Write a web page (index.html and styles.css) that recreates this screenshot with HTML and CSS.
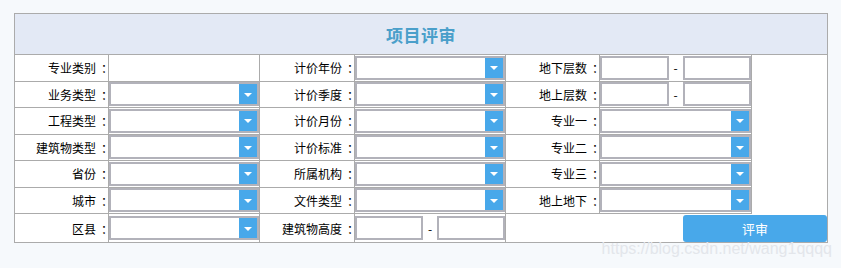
FILE: index.html
```html
<!DOCTYPE html>
<html lang="zh-CN">

<head>
    <meta charset="UTF-8">
    <meta name="viewport" content="width=device-width, initial-scale=1.0">
    <title>项目评审</title>
    <link rel="stylesheet" href="styles.css">
</head>

<body>
    <form class="review">
        <table class="review-table">
            <colgroup>
                <col class="c-lbl1">
                <col class="c-fld1">
                <col class="c-lbl2">
                <col class="c-fld2">
                <col class="c-lbl3">
                <col class="c-fld3">
                <col class="c-side">
            </colgroup>
            <tr class="row-title">
                <th colspan="7">项目评审</th>
            </tr>
            <tr>
                <td class="lbl">专业类别<span class="colon">：</span></td>
                <td></td>
                <td class="lbl">计价年份<span class="colon">：</span></td>
                <td><div class="combo"><span class="combo-text"></span><span class="combo-btn"></span></div></td>
                <td class="lbl">地下层数<span class="colon">：</span></td>
                <td><div class="range"><input type="text"><span class="dash">-</span><input type="text"></div></td>
                <td rowspan="6" class="side"></td>
            </tr>
            <tr>
                <td class="lbl">业务类型<span class="colon">：</span></td>
                <td><div class="combo"><span class="combo-text"></span><span class="combo-btn"></span></div></td>
                <td class="lbl">计价季度<span class="colon">：</span></td>
                <td><div class="combo"><span class="combo-text"></span><span class="combo-btn"></span></div></td>
                <td class="lbl">地上层数<span class="colon">：</span></td>
                <td><div class="range"><input type="text"><span class="dash">-</span><input type="text"></div></td>
            </tr>
            <tr>
                <td class="lbl">工程类型<span class="colon">：</span></td>
                <td><div class="combo"><span class="combo-text"></span><span class="combo-btn"></span></div></td>
                <td class="lbl">计价月份<span class="colon">：</span></td>
                <td><div class="combo"><span class="combo-text"></span><span class="combo-btn"></span></div></td>
                <td class="lbl">专业一<span class="colon">：</span></td>
                <td><div class="combo"><span class="combo-text"></span><span class="combo-btn"></span></div></td>
            </tr>
            <tr>
                <td class="lbl">建筑物类型<span class="colon">：</span></td>
                <td><div class="combo"><span class="combo-text"></span><span class="combo-btn"></span></div></td>
                <td class="lbl">计价标准<span class="colon">：</span></td>
                <td><div class="combo"><span class="combo-text"></span><span class="combo-btn"></span></div></td>
                <td class="lbl">专业二<span class="colon">：</span></td>
                <td><div class="combo"><span class="combo-text"></span><span class="combo-btn"></span></div></td>
            </tr>
            <tr>
                <td class="lbl">省份<span class="colon">：</span></td>
                <td><div class="combo"><span class="combo-text"></span><span class="combo-btn"></span></div></td>
                <td class="lbl">所属机构<span class="colon">：</span></td>
                <td><div class="combo"><span class="combo-text"></span><span class="combo-btn"></span></div></td>
                <td class="lbl">专业三<span class="colon">：</span></td>
                <td><div class="combo"><span class="combo-text"></span><span class="combo-btn"></span></div></td>
            </tr>
            <tr>
                <td class="lbl">城市<span class="colon">：</span></td>
                <td><div class="combo"><span class="combo-text"></span><span class="combo-btn"></span></div></td>
                <td class="lbl">文件类型<span class="colon">：</span></td>
                <td><div class="combo"><span class="combo-text"></span><span class="combo-btn"></span></div></td>
                <td class="lbl">地上地下<span class="colon">：</span></td>
                <td><div class="combo"><span class="combo-text"></span><span class="combo-btn"></span></div></td>
            </tr>
            <tr class="row-last">
                <td class="lbl">区县<span class="colon">：</span></td>
                <td><div class="combo"><span class="combo-text"></span><span class="combo-btn"></span></div></td>
                <td class="lbl">建筑物高度<span class="colon">：</span></td>
                <td><div class="range"><input type="text"><span class="dash">-</span><input type="text"></div></td>
                <td colspan="3" class="actions"><button type="submit" class="btn-review">评审</button></td>
            </tr>
        </table>
    </form>

    <p class="watermark">https://blog.csdn.net/wang1qqqq</p>
</body>

</html>
```

FILE: styles.css
```css
* {
    box-sizing: border-box;
}

body {
    margin: 0;
    padding: 13px 14px;
    background-color: #f6f9fc;
    font-family: "Noto Sans CJK SC", "Liberation Sans", sans-serif;
    font-size: 12px;
    color: #000;
}

.review-table {
    width: 813px;
    table-layout: fixed;
    border-collapse: collapse;
    background-color: #fff;
}

.c-lbl1 { width: 94px; }
.c-fld1 { width: 151px; }
.c-lbl2 { width: 95px; }
.c-fld2 { width: 151px; }
.c-lbl3 { width: 94px; }
.c-fld3 { width: 152px; }
.c-side { width: 76px; }

.review-table th,
.review-table td {
    padding: 0;
    border: 1px solid #ababab;
    vertical-align: middle;
}

.review-table tr {
    height: 26.5px;
}

.review-table .row-title {
    height: 41px;
}

.review-table .row-title th {
    background-color: #e3e9f5;
    color: #4a9fca;
    font-size: 17px;
    font-weight: bold;
    letter-spacing: 0.5px;
}

.review-table .row-last {
    height: 29px;
}

.review-table .lbl {
    text-align: right;
    white-space: nowrap;
}

/* 全角冒号：SC 字体里冒号靠左，这里挪到字框中间 */
.review-table .colon {
    display: inline-block;
    margin-left: 5px;
    margin-right: -5px;
}

.review-table .side {
    border-bottom: none;
}

.review-table .actions {
    border-top: none;
    text-align: right;
    vertical-align: bottom;
}

/* 下拉框 */
.combo {
    display: flex;
    height: 24px;
    border: 2px solid #b2b2ba;
    background-color: #fff;
}

.combo-text {
    flex: 1;
}

.combo-btn {
    display: flex;
    align-items: center;
    justify-content: center;
    width: 18px;
    background-color: #48a8ea;
}

.combo-btn::after {
    content: "";
    border-left: 4px solid transparent;
    border-right: 4px solid transparent;
    border-top: 4px solid #fff;
    margin-top: 1px;
}

/* 区间输入 */
.range {
    display: flex;
    align-items: center;
}

.range input {
    flex: 1;
    min-width: 0;
    height: 24px;
    padding: 0 3px;
    border: 2px solid #b2b2ba;
    outline: none;
    font: inherit;
}

.range .dash {
    width: 14px;
    text-align: center;
}

.btn-review {
    display: block;
    margin-left: auto;
    width: 144px;
    height: 27px;
    border: none;
    border-radius: 3px;
    background-color: #48a8ea;
    color: #fff;
    font-family: inherit;
    font-size: 13px;
    cursor: pointer;
}

.watermark {
    position: absolute;
    top: 240px;
    right: 9px;
    margin: 0;
    font-family: "Liberation Sans", sans-serif;
    font-size: 16px;
    color: #e3e6eb;
}
```
